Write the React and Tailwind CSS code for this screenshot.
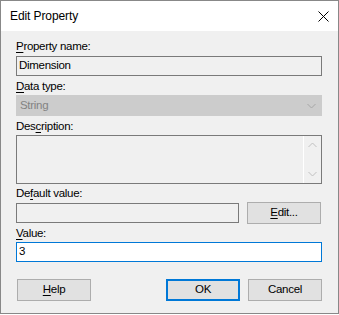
import React from "react";

const U = ({ children }) => <span className="underline underline-offset-[2px]">{children}</span>;

const Chevron = ({ up, className }) => (
  <svg width="9" height="6" viewBox="0 0 9 6" className={className}>
    <path
      d={up ? "M0.5 5 L4.5 1 L8.5 5" : "M0.5 1 L4.5 5 L8.5 1"}
      fill="none"
      stroke="currentColor"
      strokeWidth="1"
    />
  </svg>
);

const Label = ({ className = "", children }) => (
  <div className={`h-[15px] leading-[15px] text-black ${className}`}>{children}</div>
);

const Button = ({ children, primary, className = "" }) => (
  <button
    type="button"
    className={`w-[74px] h-[22px] bg-[#e1e1e1] text-black leading-none flex items-center justify-center ${
      primary ? "border-2 border-[#0078d7]" : "border border-[#adadad]"
    } ${className}`}
  >
    {children}
  </button>
);

export default function App() {
  return (
    <div className="w-[339px] h-[315px] bg-white font-['Liberation_Sans',Arial,sans-serif] text-[11.5px] tracking-[-0.3px]">
      <div className="w-[339px] h-[314px] border border-[#888888] bg-[#f0f0f0] flex flex-col">
        {/* title bar */}
        <div className="h-[30px] bg-white flex items-center justify-between pl-[9px] pr-[9px]">
          <span className="text-[12px] tracking-[-0.1px] text-black">Edit Property</span>
          <svg width="11" height="11" viewBox="0 0 11 11">
            <path d="M0.5 0.5 L10.5 10.5 M10.5 0.5 L0.5 10.5" stroke="#000" strokeWidth="1" />
          </svg>
        </div>

        {/* body */}
        <div className="flex flex-col pl-[15px] pr-[16px] pt-[8px]">
          <Label>
            <U>P</U>roperty name:
          </Label>
          <div className="mt-[2px] h-[20px] border border-[#7a7a7a] bg-[#f0f0f0] flex items-center px-[2px] text-black">
            Dimension
          </div>

          <Label className="mt-[3px]">
            <U>D</U>ata type:
          </Label>
          <div className="mt-[1px] h-[21px] border border-[#cccccc] bg-[#cccccc] flex items-center justify-between pl-[3px] pr-[5px] text-[#838383]">
            <span>String</span>
            <Chevron className="text-[#a6a6a6]" />
          </div>

          <Label className="mt-[3px]">
            Des<U>c</U>ription:
          </Label>
          <div className="mt-[1px] h-[49px] border border-[#7a7a7a] bg-[#f0f0f0] flex justify-end">
            <div className="w-[18px] border-l border-white flex flex-col justify-between items-center py-[6px]">
              <Chevron up className="text-[#c0c0c0]" />
              <Chevron className="text-[#c0c0c0]" />
            </div>
          </div>

          <Label className="mt-[2px]">
            De<U>f</U>ault value:
          </Label>
          <div className="mt-[1px] flex items-start gap-[8px]">
            <div className="mt-[1px] w-[223px] h-[20px] border border-[#7a7a7a] bg-[#f0f0f0]" />
            <Button>
              <U>E</U>dit...
            </Button>
          </div>

          <Label className="mt-[2px]">
            <U>V</U>alue:
          </Label>
          <div className="mt-[1px] h-[20px] border border-[#0078d7] bg-white flex items-center px-[2px] text-black">
            3
          </div>

          <div className="mt-[17px] flex items-center">
            <Button className="ml-[1px]">
              <U>H</U>elp
            </Button>
            <div className="flex-1" />
            <Button primary>OK</Button>
            <Button className="ml-[8px]">Cancel</Button>
          </div>
        </div>
      </div>
    </div>
  );
}
